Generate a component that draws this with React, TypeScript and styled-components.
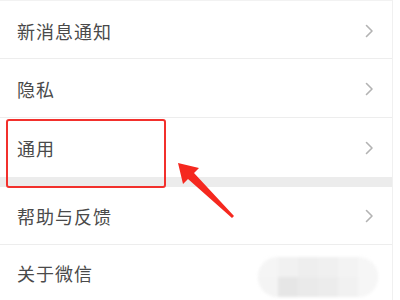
import React from "react";
import styled, { createGlobalStyle } from "styled-components";

const Global = createGlobalStyle`
  html, body { margin: 0; padding: 0; background: #fff; }
  body { width: 400px; height: 300px; overflow: hidden; font-family: "Noto Sans CJK SC", "Noto Sans", sans-serif; }
`;

const Page = styled.div`
  position: relative;
  width: 400px;
  height: 300px;
  background: #fff;
  overflow: hidden;
`;

const List = styled.div`
  width: 392px;
  border-right: 1px solid #f0f0f0;
  padding-top: 1px;
  display: flex;
  flex-direction: column;
  border-top: 1px solid #f2f2f2;
`;

const Row = styled.div<{ $h: number; $line?: boolean }>`
  height: ${(p) => p.$h}px;
  display: flex;
  align-items: center;
  justify-content: space-between;
  padding: 0 17px;
  box-shadow: ${(p) => (p.$line ? "inset 0 -1px 0 #ededed" : "none")};
  box-sizing: border-box;
`;

const Label = styled.span`
  font-size: 18px;
  letter-spacing: 1px;
  color: #4a4a4a;
  line-height: 1;
`;

const Chevron = styled.svg`
  width: 10px;
  height: 14px;
  margin-right: 1px;
`;

const Band = styled.div`
  height: 10px;
  background: #ececec;
`;

const Highlight = styled.div`
  position: absolute;
  left: 6px;
  top: 119px;
  width: 156px;
  height: 65px;
  border: 2px solid #f2302c;
  border-radius: 3px;
`;

const Arrow = styled.svg`
  position: absolute;
  left: 170px;
  top: 155px;
  width: 70px;
  height: 70px;
`;

const Mosaic = styled.div`
  position: absolute;
  left: 258px;
  top: 257px;
  width: 120px;
  height: 40px;
  border-radius: 20px;
  background: #f3f3f3;
  display: grid;
  grid-template-columns: repeat(6, 1fr);
  grid-template-rows: repeat(2, 1fr);
  overflow: hidden;
  filter: blur(1.5px);
`;

const Cell = styled.div<{ $c: string }>`
  background: ${(p) => p.$c};
`;

const ChevronIcon = () => (
  <Chevron viewBox="0 0 10 14">
    <polyline points="2.5,1.5 8,7 2.5,12.5" fill="none" stroke="#b3b3b3" strokeWidth="1.6" strokeLinecap="round" strokeLinejoin="round" />
  </Chevron>
);

const cells = [
  "#f5f5f5", "#f1f1f1", "#eeeeee", "#f0f0f0", "#f3f3f3", "#f6f6f6",
  "#f4f4f4", "#e6e6e6", "#eaeaea", "#ececec", "#f1f1f1", "#f6f6f6",
];

export default function App() {
  return (
    <Page>
      <Global />
      <List>
        <Row $h={57} $line>
          <Label>新消息通知</Label>
          <ChevronIcon />
        </Row>
        <Row $h={59} $line>
          <Label>隐私</Label>
          <ChevronIcon />
        </Row>
        <Row $h={59}>
          <Label>通用</Label>
          <ChevronIcon />
        </Row>
        <Band />
        <Row $h={58} $line>
          <Label>帮助与反馈</Label>
          <ChevronIcon />
        </Row>
        <Row $h={56}>
          <Label>关于微信</Label>
        </Row>
      </List>
      <Highlight />
      <Arrow viewBox="0 0 70 70">
        <polygon points="8,8 29,13 24,18 64,61 62,63 18,24 13,29" fill="#f5281f" />
      </Arrow>
      <Mosaic>
        {cells.map((c, i) => (
          <Cell key={i} $c={c} />
        ))}
      </Mosaic>
    </Page>
  );
}
